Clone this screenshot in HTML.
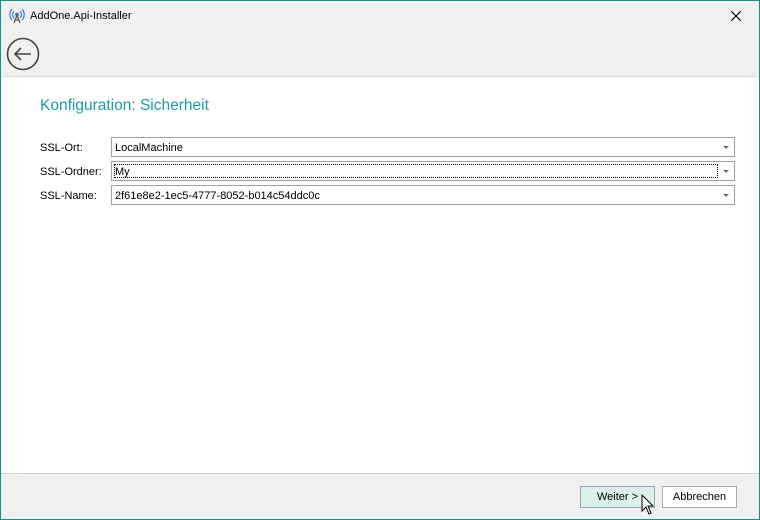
<!DOCTYPE html>
<html><head><style>
*{margin:0;padding:0;box-sizing:border-box}
body{width:760px;height:520px;overflow:hidden;font-family:"Liberation Sans",sans-serif;font-size:11px;color:#000;background:#f0f0f0}
.win{position:absolute;left:0;top:0;width:760px;height:520px;border:1px solid #1b8c90;background:#f0f0f0}
.a{position:absolute}
.title{position:absolute;left:30px;top:10px;font-size:11px}
.content{position:absolute;left:0;top:76px;width:760px;height:398px;background:#fff;border-top:1px solid #d8d8d8;border-bottom:1px solid #d0d0d0}
h1{position:absolute;left:40px;top:97px;font-weight:normal;font-size:15.5px;color:#1d9aaa}
.lbl{position:absolute;left:40px;font-size:11px}
.cb{position:absolute;left:111px;width:624px;height:20px;border:1px solid #a0a0a0;background:#fff;font-size:11px;padding:4px 3px 0}
.cb:after{content:"";position:absolute;right:5px;top:8px;border-left:3px solid transparent;border-right:3px solid transparent;border-top:3px solid #666}
.btn{position:absolute;top:486px;height:22px;border:1px solid #adadad;background:#fff;text-align:center;line-height:21px;font-size:11px}
</style></head><body>
<div class="win"></div>
<svg class="a" style="left:9px;top:8px" width="16" height="16" viewBox="0 0 16 16" fill="none" stroke="#3b78c4" stroke-width="1.2"><path d="M5 3a5 5 0 0 0 0 7M11 3a5 5 0 0 1 0 7M3 1a8 8 0 0 0 0 11M13 1a8 8 0 0 1 0 11"/><circle cx="8" cy="6.5" r="1.3" fill="#3b78c4"/><path d="M8 7L5 15M8 7l3 8M6 12h4" stroke="#555"/></svg>
<div class="title">AddOne.Api-Installer</div>
<svg class="a" style="left:731px;top:11px" width="10" height="10" viewBox="0 0 10 10" stroke="#000" stroke-width="1.1"><path d="M0 0L10 10M10 0L0 10"/></svg>
<svg class="a" style="left:6px;top:37px" width="34" height="34" viewBox="0 0 34 34" fill="none" stroke="#444" stroke-width="1.6"><circle cx="17" cy="17" r="15.5"/><path d="M9 17h16M15 11l-6 6 6 6"/></svg>
<div class="content"></div>
<div class="a" style="left:0;top:0;width:760px;height:520px;border:1px solid #1b8c90"></div>
<h1>Konfiguration: Sicherheit</h1>
<div class="lbl" style="top:142px">SSL-Ort:</div>
<div class="lbl" style="top:166px">SSL-Ordner:</div>
<div class="lbl" style="top:190px">SSL-Name:</div>
<div class="cb" style="top:137px">LocalMachine</div>
<div class="cb" style="top:161px"><div style="position:absolute;left:2px;top:2px;width:604px;height:14px;border:1px dotted #000;line-height:14px">My</div></div>
<div class="cb" style="top:185px">2f61e8e2-1ec5-4777-8052-b014c54ddc0c</div>
<div class="btn" style="left:580px;width:75px;background:#dcefe8;border-color:#8ab">Weiter &gt;</div>
<div class="btn" style="left:662px;width:75px">Abbrechen</div>
<svg class="a" style="left:641px;top:494px" width="14" height="22" viewBox="0 0 14 22"><path d="M1 1v16l4-4 3 7 2-1-3-7h5z" fill="#fff" stroke="#000"/></svg>
</body></html>
